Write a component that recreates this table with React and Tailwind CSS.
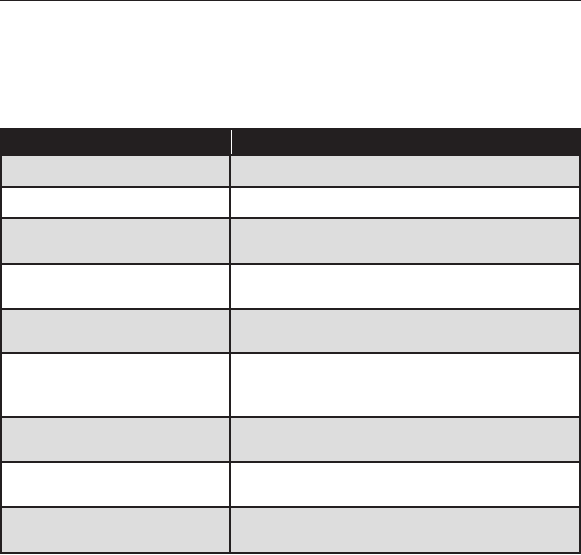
const rows = [
  { h: 'h-[32px]', grey: true },
  { h: 'h-[31px]', grey: false },
  { h: 'h-[46px]', grey: true },
  { h: 'h-[45px]', grey: false },
  { h: 'h-[44px]', grey: true },
  { h: 'h-[64px]', grey: false },
  { h: 'h-[45px]', grey: true },
  { h: 'h-[45px]', grey: false },
  { h: 'h-[46px]', grey: true },
];

export default function App() {
  return (
    <div className="w-[581px] h-[555px] bg-white overflow-hidden font-['Liberation_Sans',sans-serif]">
      {/* top rule */}
      <div className="h-px bg-[#231f20]" />

      <div className="mt-[127px]">
        {/* header */}
        <div className="flex h-[28px] bg-[#231f20]">
          <div className="w-[231px]" />
          <div className="w-px mt-[2px] mb-[2px] bg-white" />
          <div className="flex-1" />
        </div>

        {rows.map((r, i) => (
          <div
            key={i}
            className={`flex ${r.h} border-l-2 border-r-2 border-b-2 border-[#231f20] ${r.grey ? 'bg-[#dddddd]' : 'bg-white'}`}
          >
            <div className="w-[229px] border-r-2 border-[#231f20]" />
            <div className="flex-1" />
          </div>
        ))}
      </div>
    </div>
  );
}
